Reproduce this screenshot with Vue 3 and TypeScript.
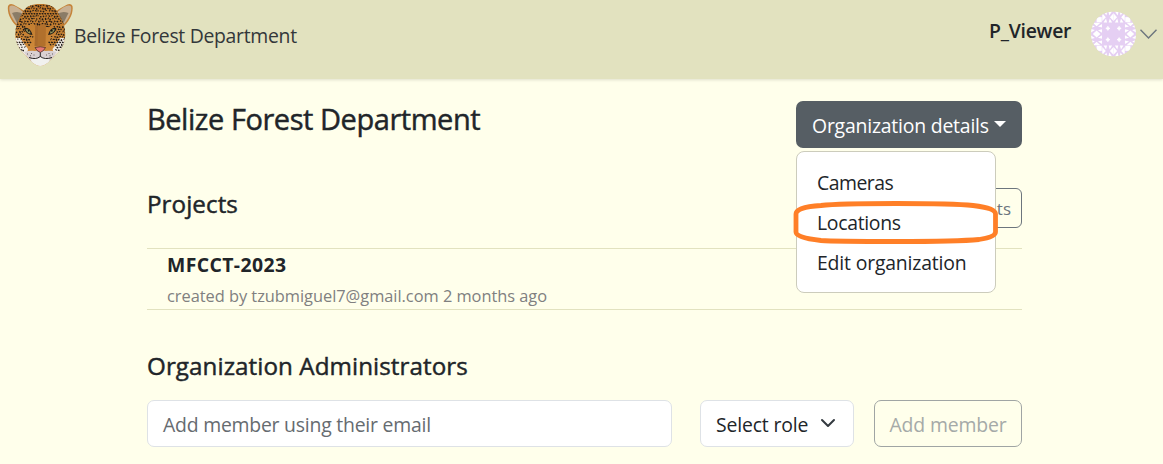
<script setup lang="ts">
interface Spot { x: number; y: number; w: number; h: number; r: number }
interface MenuItem { label: string; cls: string }

const menu: MenuItem[] = [
  { label: 'Cameras', cls: 'cameras' },
  { label: 'Locations', cls: 'locations' },
  { label: 'Edit organization', cls: 'edit' },
]

// Coat rosettes: rows of short dashes, left out along the bridge of the nose and round the eyes.
const spots: Spot[] = []
for (let row = 0; row < 18; row++) {
  for (let col = 0; col < 20; col++) {
    const n = (row * 7 + col * 13 + row * col * 3) % 11
    const x = 6.8 + col * 2.7 + (row % 2) * 1.3 + (n % 3) * 0.4
    const y = 1.3 + row * 2.6 + (n % 4) * 0.35
    const dx = Math.abs(x - 33.3)
    if (dx < 6.5 && y > 21) continue
    if (dx < 14 && dx > 6 && y > 22.5 && y < 31) continue
    if (dx < 9 && y > 33) continue
    if (dx < 15 && y > 41) continue
    spots.push({ x, y, w: 0.8 + (n % 3) * 0.22, h: 0.5 + (n % 4) * 0.13, r: (n * 37) % 180 })
  }
}

const edges = [0, 90, 180, 270]
</script>

<template>
  <div class="page">
    <header class="bar">
      <div class="brand">
        <svg class="logo" width="68" height="64" viewBox="0 0 68 64">
          <defs>
            <clipPath id="face"><path d="M33.300 0C25 0 18.500 2 15.500 9C10 17 7.500 25 8.500 34C9.500 40 13 46 17 50L25 58Q33.300 66 41.500 58L49.500 50C54 46 57.500 40 58 34C59 25 56.500 17 51 9C48 2 42 0 33.300 0Z" /></clipPath>
            <linearGradient id="coat" x1="0" y1="0" x2="0" y2="1">
              <stop offset="0" stop-color="#b87328" />
              <stop offset=".7" stop-color="#cf8a3a" />
            </linearGradient>
          </defs>
          <path d="M9.500 22C3 16 0 8 1 2Q3-2 9 2Q17 6 19 9Z" fill="#c58339" />
          <path d="M57 22C63.500 16 66.500 8 65.500 2Q63.500-2 57.500 2Q49.500 6 47.500 9Z" fill="#c58339" />
          <path d="M9.500 20C4 14 1.500 7 2.500 2.500Q6 -1 16 8Z" fill="#c9b193" />
          <path d="M57 20C62.500 14 65 7 64 2.500Q60.500 -1 50.500 8Z" fill="#c9b193" />
          <path d="M10.500 20L5 9Q12 6 17 11Z" fill="#8b7c67" />
          <path d="M56 20L61.500 9Q54.500 6 49.500 11Z" fill="#8b7c67" />
          <g clip-path="url(#face)">
            <rect width="68" height="64" fill="url(#coat)" />
            <path d="M0 34L13 34L21 45L19 55L0 55ZM67 34L53.500 34L45.500 45L48 55L67 55Z" fill="#f0ebe3" />
            <path d="M28 19L39 19L38.500 42L28.500 42Z" fill="#b1702c" />
            <path d="M28.500 22L31 22L30.500 42L27.500 42Z" fill="#a96a2b" />
            <ellipse v-for="(s, i) in spots" :key="i" :cx="s.x" :cy="s.y" :rx="s.w" :ry="s.h" :transform="`rotate(${s.r} ${s.x} ${s.y})`" fill="#211b16" />
            <path d="M17 48Q24 46 28 47L33.300 46L38.500 47Q43 46 49.500 48L43 59L24 59Z" fill="#d9d1d3" />
            <path d="M24 55Q33.300 51 42.500 55L42 64L25 64Z" fill="#f1f1ef" />
          </g>
          <path d="M17 24Q23 22.500 25.500 31Q19 31 17 24ZM49.500 24Q43.500 22.500 41 31Q47.500 31 49.500 24Z" fill="#201d18" />
          <path d="M18.500 25.500Q23 24.500 23.500 29.500Q20.500 29.500 18.500 25.500ZM48 25.500Q43.500 24.500 43 29.500Q46 29.500 48 25.500Z" fill="#97965b" />
          <circle cx="21.700" cy="26.800" r="1" fill="#171914" /><circle cx="44.800" cy="26.800" r="1" fill="#171914" />
          <path d="M28 43.500Q33.300 42 38.500 43.500Q37 47 33.300 48.500Q29.500 47 28 43.500Z" fill="#e77875" stroke="#382522" stroke-width=".7" />
          <path d="M33.300 48.500V52.500M33.300 52.500Q29 56 22 53.500M33.300 52.500Q38 56 45 53.500" fill="none" stroke="#262223" stroke-width="1" />
          <path d="M20 50h1M24 49.500h1M23 51.800h1M26.500 51h1M45 50h1M41.500 49.500h1M42.500 51.800h1M39 51h1" stroke="#4b4141" stroke-width=".8" />
        </svg>
        <span class="brand-name">Belize Forest Department</span>
      </div>
      <div class="user">
        <span class="user-name">P_Viewer</span>
        <svg class="avatar" width="45" height="46" viewBox="0 0 44 44">
          <clipPath id="disc"><circle cx="22" cy="22" r="22" /></clipPath>
          <g clip-path="url(#disc)">
            <rect width="44" height="44" fill="#e5cff3" />
            <g v-for="a in edges" :key="a" :transform="`rotate(${a} 22 22)`" fill="#fff">
              <rect x="5.500" y="5.500" width="5" height="5" />
              <path d="M11 1.800l3.500 3.700-3.500 3.700zM22 1.800l-3.500 3.700 3.500 3.700zM12.500 0h3.500l-1 3.800zM17 0h3.500l-2.500 3.800zM12.300 10.800l2.400-4 1 4zM20.700 10.800l-2.400-4-1 4z" />
              <path d="M22 1.800l3.500 3.700-3.500 3.700zM33 1.800l-3.500 3.700 3.500 3.700zM23.500 0h3.500l-1 3.800zM28 0h3.500l-2.500 3.800zM23.300 10.800l2.400-4 1 4zM31.700 10.800l-2.400-4-1 4z" />
              <path d="M16.500 14.500l.7 1.300 1.300.7-1.300.7-.7 1.300-.7-1.300-1.300-.7 1.300-.7z" stroke="#fff" stroke-width=".8" />
            </g>
          </g>
        </svg>
        <svg class="chev" width="19" height="12" viewBox="0 0 19 12"><path d="M1.500 1.800L9.500 10L17.500 1.800" fill="none" stroke="#6c757d" stroke-width="1.400" /></svg>
      </div>
    </header>

    <main class="content">
      <div class="row title-row">
        <h1>Belize Forest Department</h1>
        <div class="dropdown">
          <button class="toggle" type="button"><span>Organization details</span><i class="caret"></i></button>
          <div class="menu">
            <a v-for="m in menu" :key="m.label" :class="m.cls">{{ m.label }}</a>
            <svg class="ring" width="206" height="44" viewBox="0 0 206 44"><path d="M28 4.500Q45 2.500 103 2.500T180 4.500Q202.500 7 202.500 13V31Q202.500 36 186 38.500Q165 40.500 103 40.500T28 39.500Q3 37 3 31V13Q3 6 28 4.500Z" fill="none" stroke="#ff7f27" stroke-width="4.800" /></svg>
          </div>
        </div>
      </div>
      <div class="row projects-row">
        <h2 class="h-projects">Projects</h2>
        <button class="all" type="button">ts</button>
      </div>
      <section class="project">
        <div class="name">MFCCT-2023</div>
        <div class="meta">created by tzubmiguel7@gmail.com 2 months ago</div>
      </section>
      <h2 class="h-admins">Organization Administrators</h2>
      <div class="form">
        <div class="input"><span>Add member using their email</span></div>
        <div class="select"><span>Select role</span><svg width="16" height="16" viewBox="0 0 16 16"><path d="M2 5l6 6 6-6" fill="none" stroke="#343a40" stroke-width="2" stroke-linecap="round" stroke-linejoin="round" /></svg></div>
        <button class="add" type="button">Add member</button>
      </div>
    </main>
  </div>
</template>

<style>
body { background: #ffffeb; }
</style>

<style scoped>
* { box-sizing: border-box; }
.page { height: 464px; overflow: hidden; background: #ffffeb; color: #212529; font-family: "Open Sans", "Noto Sans", sans-serif; font-size: 19.4px; white-space: nowrap; }
button { font: inherit; padding: 0; }
h1, h2 { margin: 0; font-weight: 500; -webkit-text-stroke: .45px #212529; }
.bar { height: 79px; background: #e2e2bf; box-shadow: 0 1px 3px rgba(0, 0, 0, .13); display: flex; justify-content: space-between; }
.brand { display: flex; padding: 4px 0 0 7px; }
.logo { overflow: visible; }
.brand-name { line-height: 28px; padding-top: 18px; margin-left: -1px; letter-spacing: -.3px; color: #33373a; }
.user { display: flex; align-items: flex-start; padding: 11px 5px 0 0; }
.user-name { font-weight: 600; line-height: 28px; padding-top: 6px; letter-spacing: -.25px; width: 102px; }
.avatar { width: 45px; height: 46px; }
.chev { margin: 17px 0 0 3px; }
.content { width: 875px; margin: 0 0 0 147px; display: flex; flex-direction: column; }
.row { display: flex; justify-content: space-between; }
.title-row { padding-top: 22px; height: 109px; }
h1 { font-size: 29px; line-height: 36px; letter-spacing: -.45px; }
h2 { font-size: 24.2px; line-height: 32px; letter-spacing: .07px; }
.dropdown { position: relative; width: 226px; height: 47px; }
.toggle { width: 226px; height: 47px; border: 0; border-radius: 7px; background: #565e64; color: #fff; display: flex; align-items: center; padding: 2px 0 0 16px; letter-spacing: -.2px; }
.toggle span { width: 182px; text-align: left; }
.caret { border: 6px solid transparent; border-top-color: #fff; border-bottom: 0; margin-bottom: 3px; }
.menu { position: absolute; z-index: 2; top: 50px; left: 0; width: 200px; height: 142px; border: 1px solid #ccccbc; border-radius: 8px; background: #fff; padding: 11px 20px; display: flex; flex-direction: column; }
.menu a { height: 40px; line-height: 40px; letter-spacing: -.3px; }
.menu .cameras { letter-spacing: -.5px; }
.menu .edit { letter-spacing: -.17px; }
.ring { position: absolute; left: -4px; top: 49px; }
.projects-row { height: 60px; }
.all { width: 110px; height: 40px; border: 1px solid #6c757d; border-radius: 6px; background: transparent; color: #6c757d; font-size: 17px; text-align: right; padding-right: 10px; }
.project { height: 62px; border: 1px solid #e2e2bf; border-width: 1px 0; padding: 1px 20px 0; }
.name { font-weight: 700; line-height: 30px; letter-spacing: .4px; }
.meta { font-size: 16.4px; color: #808080; line-height: 32px; letter-spacing: -.03px; }
.h-admins { margin-top: 40px; }
.form { display: grid; grid-template-columns: 533px 154px 148px; column-gap: 20px; margin-top: 18px; height: 47px; }
.input, .select, .add { height: 47px; border-radius: 7px; border: 1px solid #dee2e6; background: #fff; line-height: 47px; }
.input { width: 525px; padding-left: 15px; color: #666b70; letter-spacing: -.22px; }
.select { padding: 1px 17px 0 15px; display: flex; justify-content: space-between; align-items: center; letter-spacing: -.15px; }
.select svg { margin-bottom: 2px; }
.add { background: transparent; border-color: #a0a5a4; color: #a5aaa8; letter-spacing: -.15px; }
</style>
